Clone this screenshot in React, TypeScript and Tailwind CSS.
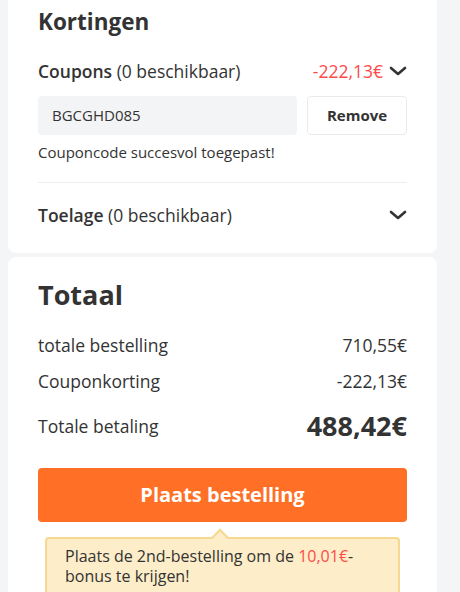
function Chevron() {
    return (
        <svg width="18" height="10" viewBox="0 0 18 10" fill="none" className="shrink-0">
            <path d="M2 2 L9 8 L16 2" stroke="#333" strokeWidth="2.6" strokeLinecap="round" strokeLinejoin="round" />
        </svg>
    );
}

export default function App() {
    return (
        <div className="h-[592px] w-[460px] overflow-hidden bg-[#f4f5f7] font-['Open_Sans',sans-serif] text-[#333]">
            <div className="flex w-[437px] flex-col gap-1 pl-2">
                <div className="rounded-b-lg bg-white px-[30px] pb-[26px] pt-[6px]">
                    <h2 className="text-[22.5px] font-bold leading-[32px]">Kortingen</h2>

                    <div className="mt-[21px] flex items-center justify-between text-[17.5px] leading-6">
                        <div>
                            <span className="font-semibold">Coupons</span> (0 beschikbaar)
                        </div>
                        <div className="flex items-center gap-[6px]">
                            <span className="text-[#fd4b4b]">-222,13€</span>
                            <Chevron />
                        </div>
                    </div>

                    <div className="mt-[13px] flex gap-[10px]">
                        <div className="flex h-[39px] flex-1 items-center rounded bg-[#f3f4f6] px-[14px] text-[15px]">
                            BGCGHD085
                        </div>
                        <button className="h-[39px] w-[100px] rounded border border-[#ebebeb] bg-white text-[15px] font-bold">
                            Remove
                        </button>
                    </div>

                    <p className="mt-[7px] text-[15px] leading-5">Couponcode succesvol toegepast!</p>

                    <div className="mt-[20px] border-t border-[#eeeeee]" />

                    <div className="mt-[20px] flex items-center justify-between text-[17.5px] leading-6">
                        <div>
                            <span className="font-semibold">Toelage</span> (0 beschikbaar)
                        </div>
                        <Chevron />
                    </div>
                </div>

                <div className="rounded-t-lg bg-white px-[30px] pt-[19px] pb-[40px]">
                    <h2 className="text-[27px] font-bold leading-[38px]">Totaal</h2>

                    <div className="mt-[19px] flex flex-col gap-[12px] text-[17.5px] leading-6">
                        <div className="flex justify-between">
                            <span>totale bestelling</span>
                            <span>710,55€</span>
                        </div>
                        <div className="flex justify-between">
                            <span>Couponkorting</span>
                            <span>-222,13€</span>
                        </div>
                        <div className="mt-[3px] flex items-center justify-between">
                            <span>Totale betaling</span>
                            <span className="text-[27px] font-bold leading-9">488,42€</span>
                        </div>
                    </div>

                    <button className="mt-[24px] h-[54px] w-full rounded bg-[#ff6f26] text-[20px] font-bold text-white">
                        Plaats bestelling
                    </button>

                    <div className="relative mx-[7px] mt-[15px] rounded border-2 border-[#f6d990] bg-[#fdedc8] px-[18px] pt-[7px] pb-[9px] text-[16px] leading-[20px]">
                        <div className="absolute -top-[8px] left-[167px] h-3 w-3 rotate-45 border-l-2 border-t-2 border-[#f6d990] bg-[#fdedc8]" />
                        <p>
                            Plaats de 2nd-bestelling om de <span className="text-[#fd4b4b]">10,01€</span>-
                        </p>
                        <p>bonus te krijgen!</p>
                    </div>
                </div>
            </div>
        </div>
    );
}
